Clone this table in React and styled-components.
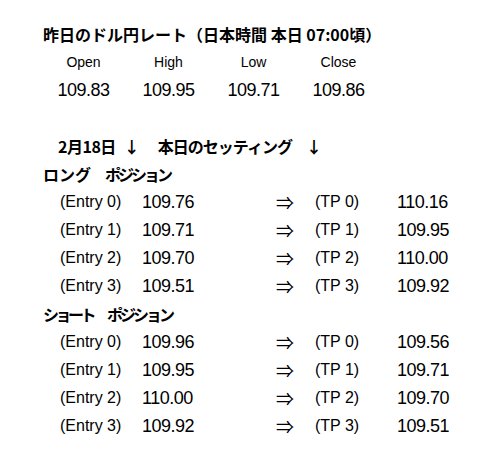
import React from "react";
import styled, { createGlobalStyle } from "styled-components";

const Global = createGlobalStyle`
  html, body { margin: 0; padding: 0; background: #fff; }
  body { width: 500px; height: 450px; overflow: hidden; color: #000; }
`;

const Page = styled.div`
  padding: 20px 0 0 0;
  display: flex;
  flex-direction: column;
`;

const Row = styled.div`
  height: 28px;
  display: flex;
  align-items: center;
  padding-left: ${(p) => p.$indent || 0}px;
`;

const Heading = styled.div`
  font-family: "Noto Sans CJK JP", sans-serif;
  font-weight: 700;
  font-size: 16px;
  white-space: pre;
  display: flex;
  align-items: center;
`;

const Part = styled.span`
  margin-left: ${(p) => p.$ml || 0}px;
  letter-spacing: ${(p) => p.$ls || 0}px;
`;

const RateGrid = styled.div`
  display: grid;
  grid-template-columns: repeat(4, 85px);
  margin-left: 41px;
`;

const RateCell = styled.div`
  height: 28px;
  display: flex;
  align-items: center;
  justify-content: center;
  font-family: "Liberation Sans", Arial, sans-serif;
  font-size: ${(p) => (p.$head ? 14 : 18)}px;
  letter-spacing: ${(p) => (p.$head ? 0 : -0.5)}px;
`;

const Blank = styled.div`
  height: 28px;
`;

const EntryRow = styled.div`
  height: 28px;
  display: grid;
  grid-template-columns: 82px 134px 39px 82px auto;
  align-items: center;
  padding-left: 60px;
  font-family: "Liberation Sans", Arial, sans-serif;
`;

const Label = styled.span`
  font-size: 16px;
  white-space: pre;
`;

const Num = styled.span`
  font-size: 18px;
  letter-spacing: -0.5px;
`;

const Arrow = styled.span`
  font-family: "Noto Sans CJK JP", sans-serif;
  font-weight: 400;
  font-size: 18px;
  line-height: 1;
`;

const rates = [
  ["Open", "109.83"],
  ["High", "109.95"],
  ["Low", "109.71"],
  ["Close", "109.86"],
];

const longRows = [
  ["109.76", "110.16"],
  ["109.71", "109.95"],
  ["109.70", "110.00"],
  ["109.51", "109.92"],
];

const shortRows = [
  ["109.96", "109.56"],
  ["109.95", "109.71"],
  ["110.00", "109.70"],
  ["109.92", "109.51"],
];

function Entries({ rows }) {
  return rows.map(([e, t], i) => (
    <EntryRow key={i}>
      <Label>{`(Entry ${i})`}</Label>
      <Num>{e}</Num>
      <Arrow>⇒</Arrow>
      <Label>{`(TP ${i})`}</Label>
      <Num>{t}</Num>
    </EntryRow>
  ));
}

export default function App() {
  return (
    <>
      <Global />
      <Page>
        <Row $indent={43}>
          <Heading>昨日のドル円レート（日本時間 本日 07:00頃）</Heading>
        </Row>
        <RateGrid>
          {rates.map(([h]) => (
            <RateCell key={h} $head>{h}</RateCell>
          ))}
          {rates.map(([h, v]) => (
            <RateCell key={h + v}>{v}</RateCell>
          ))}
        </RateGrid>
        <Blank />
        <Row $indent={58}>
          <Heading>
            <Part $ls={-0.5}>2月18日</Part>
            <Part $ml={8}>↓</Part>
            <Part $ml={18} $ls={-1}>本日のセッティング</Part>
            <Part $ml={14}>↓</Part>
          </Heading>
        </Row>
        <Row $indent={43}>
          <Heading>
            <Part>ロング</Part>
            <Part $ml={14} $ls={-3}>ポジション</Part>
          </Heading>
        </Row>
        <Entries rows={longRows} />
        <Row $indent={43}>
          <Heading>
            <Part $ls={-3.5}>ショート</Part>
            <Part $ml={14} $ls={-3}>ポジション</Part>
          </Heading>
        </Row>
        <Entries rows={shortRows} />
      </Page>
    </>
  );
}
